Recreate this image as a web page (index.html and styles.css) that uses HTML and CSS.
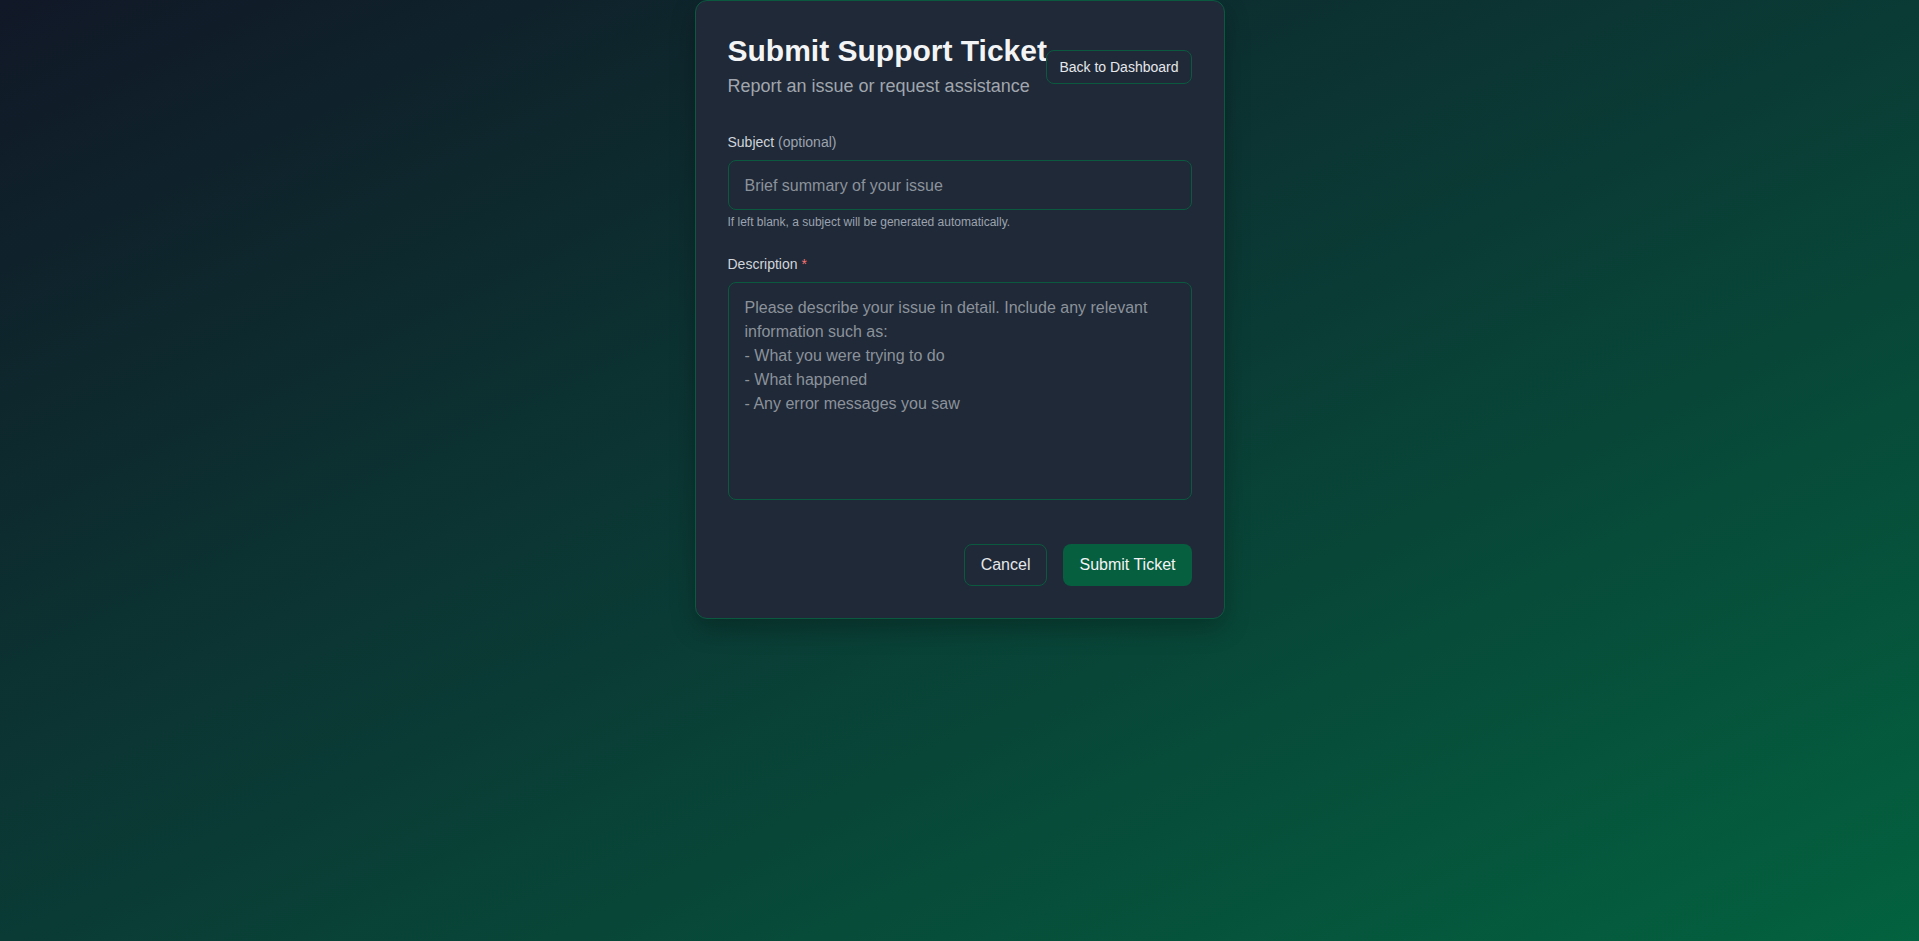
FILE: index.html
```html
<!DOCTYPE html>
<html lang="en">
<head>
<meta charset="utf-8">
<title>Submit Support Ticket</title>
<link rel="stylesheet" href="styles.css">
</head>
<body>
<main class="page">
  <section class="card">
    <header class="card-header">
      <div class="heading">
        <h1 class="title">Submit Support Ticket</h1>
        <p class="subtitle">Report an issue or request assistance</p>
      </div>
      <button class="btn btn-outline btn-small" type="button">Back to Dashboard</button>
    </header>
    <form class="form">
      <div class="field">
        <label class="label" for="subject">Subject <span class="optional">(optional)</span></label>
        <input class="input" id="subject" type="text" placeholder="Brief summary of your issue">
        <p class="hint">If left blank, a subject will be generated automatically.</p>
      </div>
      <div class="field">
        <label class="label" for="description">Description <span class="required">*</span></label>
        <textarea class="input textarea" id="description" rows="8" placeholder="Please describe your issue in detail. Include any relevant information such as:&#10;- What you were trying to do&#10;- What happened&#10;- Any error messages you saw"></textarea>
      </div>
      <div class="actions">
        <button class="btn btn-outline" type="button">Cancel</button>
        <button class="btn btn-primary" type="submit">Submit Ticket</button>
      </div>
    </form>
  </section>
</main>
</body>
</html>
```

FILE: styles.css
```css
* { box-sizing: border-box; }

html, body {
  margin: 0;
  padding: 0;
}

body {
  min-height: 100vh;
  font-family: "Liberation Sans", Arial, sans-serif;
  background: linear-gradient(to bottom right, #111827 0%, #0a3b35 50%, #03623f 100%);
  color: #e5e7eb;
}

.page {
  display: flex;
  justify-content: center;
}

.card {
  width: 530px;
  background: #1f2937;
  border: 1px solid #0b5a40;
  border-radius: 12px;
  padding: 32px;
  box-shadow: 0 10px 25px rgba(0, 0, 0, 0.25);
}

.card-header {
  display: flex;
  align-items: center;
  justify-content: space-between;
  margin-bottom: 32px;
}

.heading {
  flex: 1 1 auto;
  min-width: 0;
}

.title {
  margin: 0;
  font-size: 30px;
  line-height: 36px;
  font-weight: 700;
  color: #f3f4f6;
  white-space: nowrap;
}

.subtitle {
  margin: 3px 0 0;
  font-size: 18px;
  line-height: 28px;
  color: #a1a6ae;
  white-space: nowrap;
}

.form {
  display: flex;
  flex-direction: column;
}

.field {
  display: flex;
  flex-direction: column;
}

.field + .field {
  margin-top: 24px;
}

.label {
  font-size: 14px;
  line-height: 20px;
  color: #d1d5db;
  margin-bottom: 8px;
}

.optional {
  color: #9ca3af;
}

.required {
  color: #f87171;
}

.input {
  display: block;
  width: 100%;
  font-family: "Liberation Sans", Arial, sans-serif;
  font-size: 16px;
  line-height: 24px;
  padding: 13px 16px 11px;
  background: #1f2937;
  color: #e5e7eb;
  border: 1px solid #0b5a40;
  border-radius: 8px;
  outline: none;
  margin: 0;
}

.input::placeholder {
  color: #8c929b;
  opacity: 1;
}

.textarea {
  resize: none;
  height: 218px;
}

.hint {
  margin: 4px 0 0;
  font-size: 12px;
  line-height: 16px;
  color: #9ca3af;
}

.actions {
  display: flex;
  justify-content: flex-end;
  gap: 16px;
  margin-top: 44px;
}

.btn {
  font-family: "Liberation Sans", Arial, sans-serif;
  font-size: 16px;
  line-height: 24px;
  padding: 8px 16px;
  border-radius: 8px;
  cursor: pointer;
  border: 1px solid transparent;
  margin: 0;
}

.btn-outline {
  background: transparent;
  border-color: #0b5a40;
  color: #e5e7eb;
}

.btn-small {
  flex: 0 0 auto;
  font-size: 14px;
  line-height: 20px;
  padding: 6px 12px;
}

.btn-primary {
  background: #065f3f;
  border: none;
  padding: 9px 16px;
  color: #f3f4f6;
}
```
